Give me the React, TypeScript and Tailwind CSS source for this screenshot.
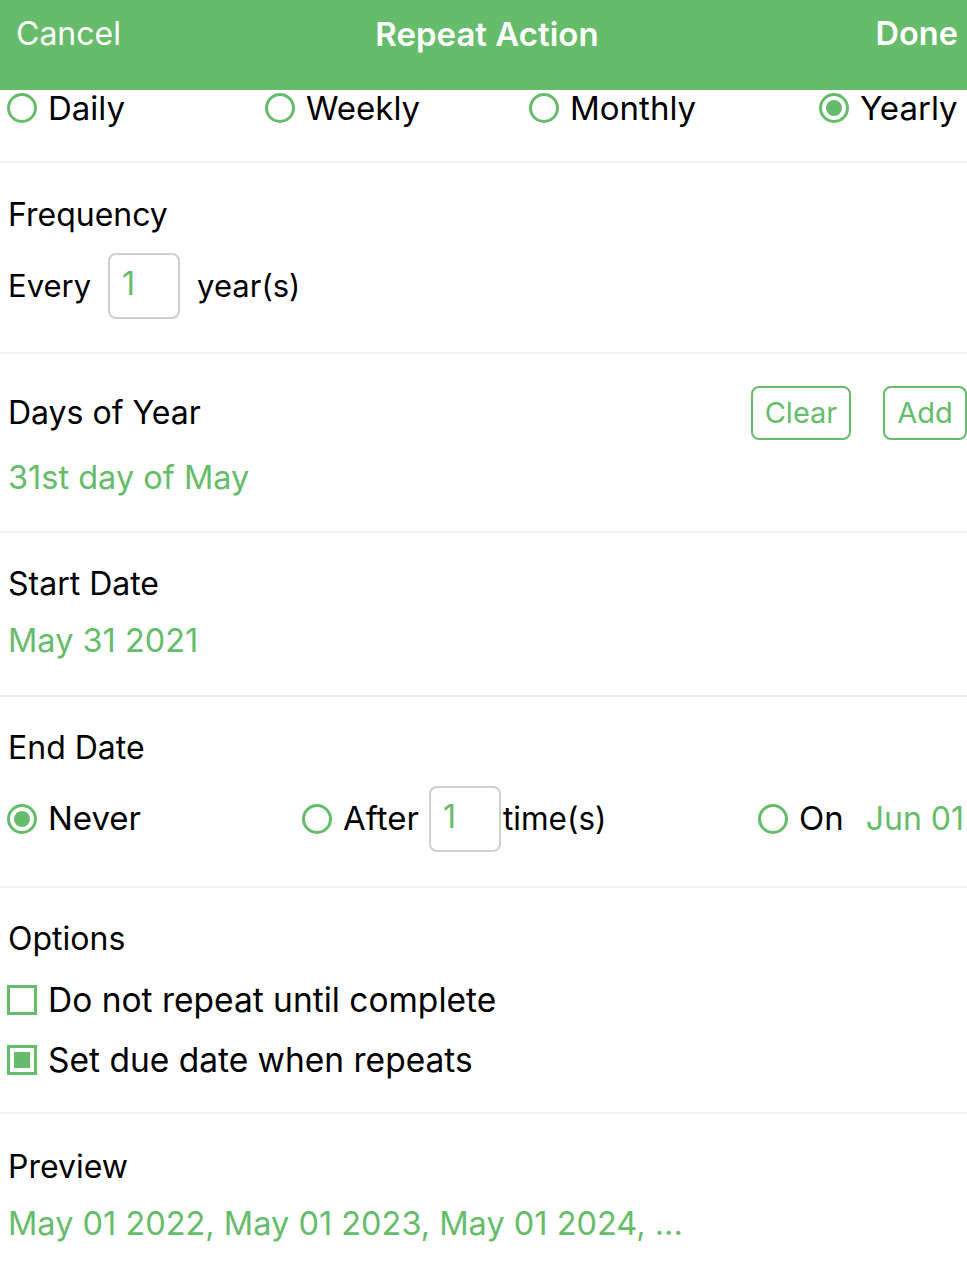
import React from "react";

const green = "text-[#66bc6a]";

const Radio = ({ checked }: { checked?: boolean }) => (
  <span className="flex h-[30px] w-[30px] shrink-0 items-center justify-center rounded-full border-[3px] border-[#66bc6a] bg-white">
    {checked && <span className="h-[16px] w-[16px] rounded-full bg-[#66bc6a]" />}
  </span>
);

const Checkbox = ({ checked }: { checked?: boolean }) => (
  <span className="flex h-[30px] w-[30px] shrink-0 items-center justify-center border-[3px] border-[#66bc6a] bg-white">
    {checked && <span className="h-[16px] w-[16px] bg-[#66bc6a]" />}
  </span>
);

const Divider = () => <div className="h-[2px] w-full bg-[#f1f1f6]" />;

const NumberBox = ({ value }: { value: string }) => (
  <div className="flex h-[66px] w-[72px] items-start rounded-[8px] border-2 border-[#cfcfcf] pl-[12px] pt-[10px]">
    <span className={`${green} text-[32px] leading-[38px]`}>{value}</span>
  </div>
);

const OutlineButton = ({ label, width }: { label: string; width: string }) => (
  <button className={`${width} h-[54px] rounded-[8px] border-2 border-[#66bc6a] text-[29px] ${green}`}>
    {label}
  </button>
);

export default function App() {
  return (
    <div className="min-h-[1267px] w-[967px] bg-white text-black" style={{ fontFamily: "Inter, 'Noto Sans', sans-serif" }}>
      {/* nav bar */}
      <div className="flex h-[90px] items-start justify-between bg-[#66bc6a] px-[9px] pl-[16px] pt-[14px] text-white">
        <span className="w-[200px] text-[32px] leading-[40px]">Cancel</span>
        <span className="text-[33px] font-semibold leading-[40px]">Repeat Action</span>
        <span className="w-[200px] text-right text-[32.5px] font-semibold leading-[40px]">Done</span>
      </div>

      {/* period */}
      <div className="flex h-[71px] items-start pl-[7px] pt-[1px] text-[33px] leading-[34px]">
        <label className="flex w-[258px] items-center gap-[11px]">
          <Radio />
          <span>Daily</span>
        </label>
        <label className="flex w-[264px] items-center gap-[11px]">
          <Radio />
          <span>Weekly</span>
        </label>
        <label className="flex w-[290px] items-center gap-[11px]">
          <Radio />
          <span>Monthly</span>
        </label>
        <label className="flex items-center gap-[11px]">
          <Radio checked />
          <span>Yearly</span>
        </label>
      </div>
      <Divider />

      {/* frequency */}
      <div className="flex h-[189px] flex-col px-[8px] pt-[34px]">
        <div className="text-[32px] leading-[36px]">Frequency</div>
        <div className="mt-[20px] flex items-center text-[31px]">
          <span>Every</span>
          <div className="ml-[17px] mr-[17px]">
            <NumberBox value="1" />
          </div>
          <span>year(s)</span>
        </div>
      </div>
      <Divider />

      {/* days of year */}
      <div className="flex h-[177px] flex-col pl-[8px] pt-[32px]">
        <div className="flex items-center justify-between">
          <span className="text-[32px] leading-[36px]">Days of Year</span>
          <div className="flex gap-[32px]">
            <OutlineButton label="Clear" width="w-[100px]" />
            <OutlineButton label="Add" width="w-[84px]" />
          </div>
        </div>
        <div className={`mt-[20px] text-[32.5px] leading-[36px] ${green}`}>31st day of May</div>
      </div>
      <Divider />

      {/* start date */}
      <div className="flex h-[162px] flex-col px-[8px] pt-[33px]">
        <div className="text-[32px] leading-[36px]">Start Date</div>
        <div className={`mt-[21px] text-[32.5px] leading-[36px] ${green}`}>May 31 2021</div>
      </div>
      <Divider />

      {/* end date */}
      <div className="flex h-[189px] flex-col pt-[33px]">
        <div className="px-[8px] text-[32px] leading-[36px]">End Date</div>
        <div className="mt-[20px] flex items-center pl-[7px] text-[33px]">
          <label className="flex w-[295px] items-center gap-[11px]">
            <Radio checked />
            <span>Never</span>
          </label>
          <label className="flex w-[456px] items-center">
            <Radio />
            <span className="ml-[11px] mr-[10px]">After</span>
            <NumberBox value="1" />
            <span className="ml-[2px] text-[31.5px]">time(s)</span>
          </label>
          <label className="flex items-center gap-[11px]">
            <Radio />
            <span>On</span>
            <span className={`ml-[11px] text-[32px] ${green}`}>Jun 01</span>
          </label>
        </div>
      </div>
      <Divider />

      {/* options */}
      <div className="flex h-[224px] flex-col px-[8px] pt-[33px]">
        <div className="text-[32px] leading-[36px]">Options</div>
        <label className="mt-[23px] flex items-center gap-[11px] text-[33.5px] leading-[40px]">
          <span className="-ml-[1px]"><Checkbox /></span>
          <span>Do not repeat until complete</span>
        </label>
        <label className="mt-[20px] flex items-center gap-[11px] text-[33.5px] leading-[40px]">
          <span className="-ml-[1px]"><Checkbox checked /></span>
          <span>Set due date when repeats</span>
        </label>
      </div>
      <Divider />

      {/* preview */}
      <div className="flex flex-col px-[8px] pt-[35px]">
        <div className="text-[32px] leading-[36px]">Preview</div>
        <div className={`mt-[21px] text-[32.5px] leading-[36px] ${green}`}>
          May 01 2022, May 01 2023, May 01 2024, ...
        </div>
      </div>
    </div>
  );
}
